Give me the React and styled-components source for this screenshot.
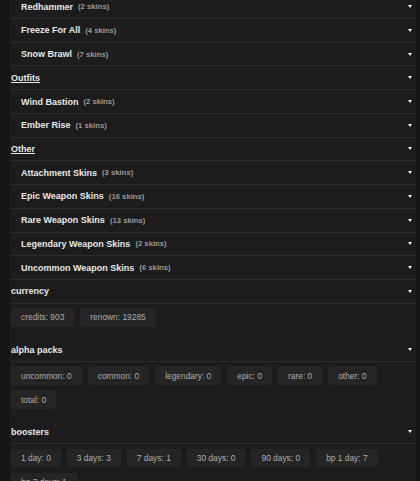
import React from "react";
import styled, {createGlobalStyle} from "styled-components";

const GlobalStyle = createGlobalStyle`
  body {
    margin: 0;
    background: #151515;
    font-family: "Liberation Sans", Arial, sans-serif;
    overflow: hidden;
  }
`;

const Page = styled.div`
  margin: 0 4px 0 10px;
  min-height: 100vh;
  background: #1c1c1c;
`;

const Scroller = styled.div`
  margin-top: -4.7px;
`;

const Row = styled.div`
  display: flex;
  align-items: center;
  height: 22.73px;
  padding-left: ${props => (props.$sub ? "11px" : "1px")};
  padding-right: 3px;
  border-bottom: 1px solid #2c2c2c;
`;

const Name = styled.span`
  font-size: 9px;
  font-weight: bold;
  color: #e8e8e8;
  text-decoration: ${props => (props.$category ? "underline" : "none")};
`;

const Count = styled.span`
  margin-left: 5px;
  font-size: 7.7px;
  font-weight: bold;
  color: #9a9a9a;
`;

const Caret = styled.span`
  margin-left: auto;
  width: 0;
  height: 0;
  border-left: 2.5px solid transparent;
  border-right: 2.5px solid transparent;
  border-top: 3.5px solid #f2f2f2;
  margin-right: 1px;
`;

const Chips = styled.div`
  display: flex;
  flex-wrap: wrap;
  gap: 5.5px 6px;
  padding: 4.5px 0 11.5px 1px;
`;

const Chip = styled.span`
  display: flex;
  align-items: center;
  height: 18.5px;
  padding: 0 10px;
  border-radius: 2px;
  background: #252525;
  color: #adadad;
  font-size: 8.4px;
`;

const skins = [
    {name: "Redhammer", count: 2},
    {name: "Freeze For All", count: 4},
    {name: "Snow Brawl", count: 7},
    {category: "Outfits"},
    {name: "Wind Bastion", count: 2},
    {name: "Ember Rise", count: 1},
    {category: "Other"},
    {name: "Attachment Skins", count: 3},
    {name: "Epic Weapon Skins", count: 16},
    {name: "Rare Weapon Skins", count: 13},
    {name: "Legendary Weapon Skins", count: 2},
    {name: "Uncommon Weapon Skins", count: 6}
];

const sections = [
    {title: "currency", items: ["credits: 903", "renown: 19285"]},
    {
        title: "alpha packs",
        items: ["uncommon: 0", "common: 0", "legendary: 0", "epic: 0", "rare: 0", "other: 0", "total: 0"]
    },
    {
        title: "boosters",
        items: ["1 day: 0", "3 days: 3", "7 days: 1", "30 days: 0", "90 days: 0", "bp 1 day: 7", "bp 3 days: 1"]
    }
];

export default function App() {
    return (
        <Page>
            <GlobalStyle/>
            <Scroller>
                {skins.map(s =>
                    s.category ? (
                        <Row key={s.category}>
                            <Name $category>{s.category}</Name>
                            <Caret/>
                        </Row>
                    ) : (
                        <Row key={s.name} $sub>
                            <Name>{s.name}</Name>
                            <Count>({s.count} skins)</Count>
                            <Caret/>
                        </Row>
                    )
                )}
                {sections.map(sec => (
                    <div key={sec.title}>
                        <Row>
                            <Name>{sec.title}</Name>
                            <Caret/>
                        </Row>
                        <Chips>
                            {sec.items.map(item => (
                                <Chip key={item}>{item}</Chip>
                            ))}
                        </Chips>
                    </div>
                ))}
            </Scroller>
        </Page>
    );
}
